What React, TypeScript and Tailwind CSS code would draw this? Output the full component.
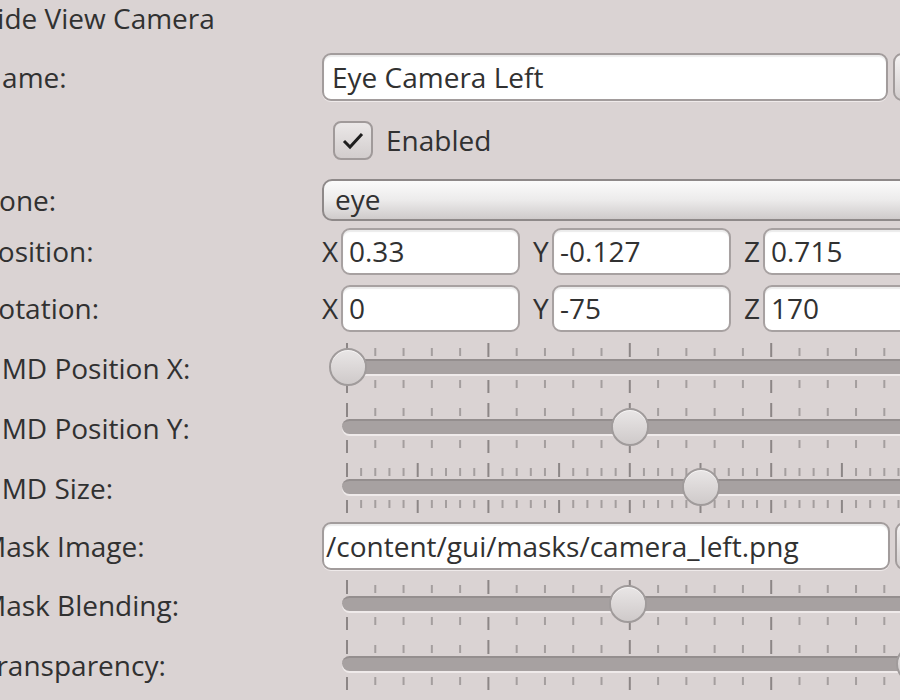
import React from "react";

type SliderProps = { handle: number; dense?: boolean };

// handle = x of the knob centre, measured from the left end of the track
function Slider({ handle, dense }: SliderProps) {
  const step = dense ? 14.14 : 28.28;
  const ticks = Array.from({ length: Math.ceil(700 / step) }, (_, i) => i);
  return (
    <div className="relative ml-[20px] h-[50px] w-[700px] shrink-0">
      <svg className="absolute left-0 top-0" width="700" height="50">
        {ticks.map((i) => {
          const x = 5 + i * step;
          const major = i % 5 === 0;
          return (
            <g key={i} stroke={major ? "#8c8686" : "#a49e9e"} strokeWidth="2">
              <line x1={x} x2={x} y1={major ? 0 : 5} y2={major ? 14 : 13} />
              <line x1={x} x2={x} y1={37} y2={major ? 50 : 45} />
            </g>
          );
        })}
      </svg>
      <div className="absolute left-0 right-0 top-[16px] h-[15px] rounded-l-full border-t-2 border-[#948e8e] bg-[#a7a1a1] shadow-[0_2px_0_#efeaea]" />
      <div
        className="absolute top-[5px] h-[38px] w-[38px] rounded-full border-2 border-[#a09b9b] bg-gradient-to-b from-[#e9e6e6] to-[#cfcaca] shadow-[inset_0_1px_0_#f7f5f5]"
        style={{ left: handle - 19 }}
      />
    </div>
  );
}

function Row({ label, className, children }: { label: string; className: string; children?: React.ReactNode }) {
  return (
    <div className={className}>
      <div className="w-[341px] shrink-0 whitespace-nowrap">{label}</div>
      <div className="flex items-center">{children}</div>
    </div>
  );
}

function Field({ value, className }: { value: string; className: string }) {
  return (
    <div className={className}>
      <span className="whitespace-nowrap">{value}</span>
    </div>
  );
}

function BrowseButton({ className }: { className: string }) {
  return <div className={className} />;
}

function Vec({ values, className }: { values: string[]; className: string }) {
  const axes = ["X", "Y", "Z"];
  return (
    <div className={className}>
      {values.map((v, i) => (
        <div key={axes[i]} className="flex w-[211px] shrink-0 items-center">
          <span className="w-[19px] shrink-0">{axes[i]}</span>
          <Field
            value={v}
            className="flex h-[47px] w-[179px] shrink-0 items-center rounded-[9px] border-2 border-[#a7a1a1] bg-white pl-[6px] shadow-[inset_0_2px_1px_rgba(0,0,0,0.08)]"
          />
        </div>
      ))}
    </div>
  );
}

export default function App() {
  return (
    <div className="h-[700px] w-[900px] overflow-hidden bg-[#dad3d3] font-['Open_Sans','DejaVu_Sans',sans-serif] text-[28px] leading-none text-[#313131]">
      <div className="-ml-[19px] w-[1200px]">
        <div className="flex h-[36px] items-center pl-[1px]">Side View Camera</div>

        <Row label="Name:" className="mt-[17px] flex h-[48px] items-center">
          <Field
            value="Eye Camera Left"
            className="flex h-[48px] w-[566px] items-center rounded-[9px] border-2 border-[#a29c9c] bg-white pl-[8px] shadow-[inset_0_2px_1px_rgba(0,0,0,0.08),0_1px_0_#efeaea]"
          />
          <BrowseButton className="ml-[5px] h-[48px] w-[40px] rounded-[9px] border-2 border-[#a29c9c] bg-gradient-to-b from-[#f6f4f4] to-[#d4cfcf]" />
        </Row>

        <Row label="" className="mt-[19px] flex h-[40px] items-center">
          <div className="ml-[11px] flex h-[39px] w-[40px] items-center justify-center rounded-[8px] border-2 border-[#a09a9a] bg-gradient-to-b from-[#ebe8e8] to-[#d2cdcd]">
            <svg width="24" height="20" viewBox="0 0 24 20">
              <path d="M3 11 L9 17 L21 4" fill="none" stroke="#1e1e1e" strokeWidth="3" />
            </svg>
          </div>
          <span className="ml-[13px]">Enabled</span>
        </Row>

        <Row label="Bone:" className="mt-[20px] flex h-[40px] items-center">
          <div className="flex h-[42px] w-[700px] items-center rounded-[10px] border-2 border-[#8e8989] bg-gradient-to-b from-[#fbfbfb] via-[#ecebeb] to-[#cfcbcb] pb-[2px] pl-[11px]">
            eye
          </div>
        </Row>

        <Row label="Position:" className="mt-[8px] flex h-[46px] items-center">
          <Vec values={["0.33", "-0.127", "0.715"]} className="flex items-center" />
        </Row>

        <Row label="Rotation:" className="mt-[11px] flex h-[46px] items-center">
          <Vec values={["0", "-75", "170"]} className="flex items-center" />
        </Row>

        <Row label="HMD Position X:" className="mt-[12px] flex h-[50px] items-center">
          <Slider handle={6} />
        </Row>

        <Row label="HMD Position Y:" className="mt-[10px] flex h-[50px] items-center">
          <Slider handle={288} />
        </Row>

        <Row label="HMD Size:" className="mt-[10px] flex h-[50px] items-center">
          <Slider handle={359} dense />
        </Row>

        <Row label="Mask Image:" className="mt-[9px] flex h-[48px] items-center">
          <Field
            value="/content/gui/masks/camera_left.png"
            className="flex h-[48px] w-[568px] items-center rounded-[9px] border-2 border-[#a29c9c] bg-white pl-[2px] shadow-[inset_0_2px_1px_rgba(0,0,0,0.08),0_1px_0_#efeaea]"
          />
          <BrowseButton className="ml-[5px] h-[48px] w-[40px] rounded-[9px] border-2 border-[#a29c9c] bg-gradient-to-b from-[#f6f4f4] to-[#d4cfcf]" />
        </Row>

        <Row label="Mask Blending:" className="mt-[10px] flex h-[50px] items-center">
          <Slider handle={286} />
        </Row>

        <Row label="Transparency:" className="mt-[10px] flex h-[50px] items-center">
          <Slider handle={573} />
        </Row>
      </div>
    </div>
  );
}
